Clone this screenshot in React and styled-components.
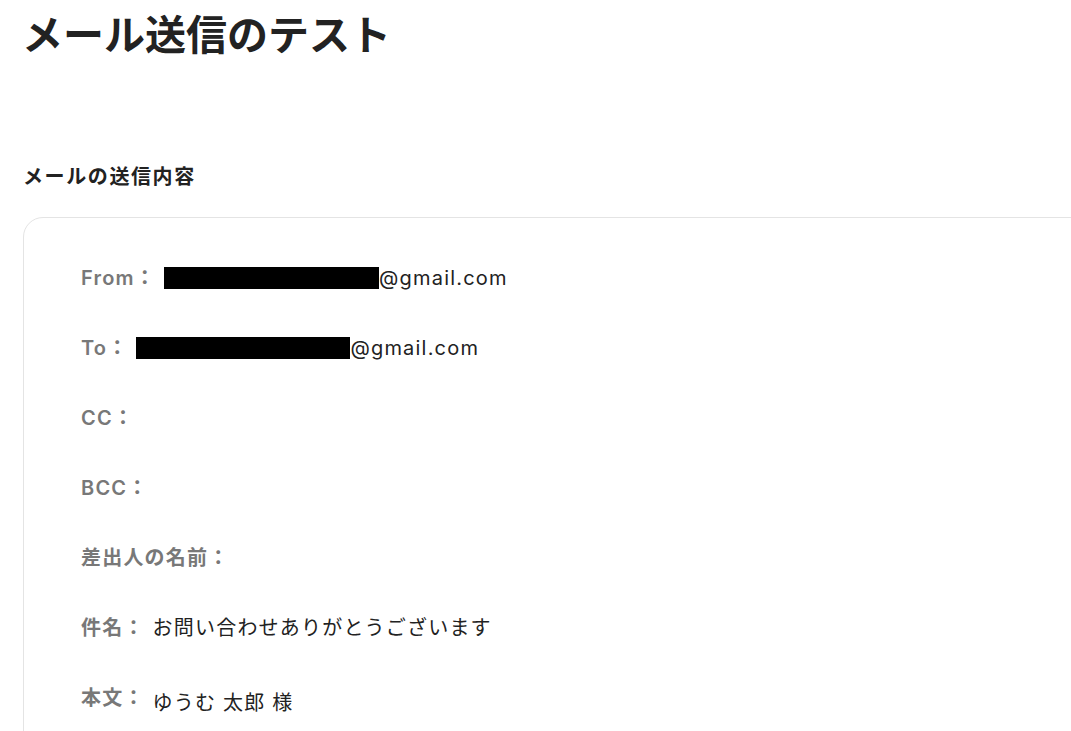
import styled, { createGlobalStyle } from 'styled-components'

const GlobalStyle = createGlobalStyle`
  body {
    margin: 0;
    background: #ffffff;
    font-family: "Inter", "Noto Sans CJK JP", sans-serif;
    color: #222222;
  }
`

const rows = [
  { label: 'From', redactWidth: 215, value: '@gmail.com' },
  { label: 'To', redactWidth: 214, value: '@gmail.com' },
  { label: 'CC' },
  { label: 'BCC' },
  { label: '差出人の名前' },
  { label: '件名', value: 'お問い合わせありがとうございます' },
  { label: '本文', value: 'ゆうむ 太郎 様', low: true },
]

const App = () => {
  return (
    <>
      <GlobalStyle />
      <Page>
        <Title>メール送信のテスト</Title>
        <SubTitle>メールの送信内容</SubTitle>
        <Card>
          {rows.map((row) => (
            <Row key={row.label}>
              <Label>{row.label}：</Label>
              <Value low={row.low}>
                {row.redactWidth && <Redact style={{ width: row.redactWidth }} />}
                {row.value}
              </Value>
            </Row>
          ))}
        </Card>
      </Page>
    </>
  )
}

export default App

const Page = styled.div`
  padding: 0 0 0 22px;
  overflow: hidden;
  height: 731px;
  box-sizing: border-box;
`
const Title = styled.h1`
  margin: 0;
  font-family: "Noto Sans CJK JP", sans-serif;
  font-size: 41px;
  line-height: 64px;
  font-weight: 700;
  color: #222222;
`
const SubTitle = styled.h2`
  margin: 97px 0 0 1px;
  font-family: "Noto Sans CJK JP", sans-serif;
  font-size: 20px;
  line-height: 30px;
  letter-spacing: 0.08em;
  font-weight: 700;
  color: #222222;
`
const Card = styled.div`
  margin: 26px 0 0 1px;
  width: 1200px;
  border: 1px solid #e4e4e4;
  border-radius: 20px;
  padding: 45px 0 0 57px;
  display: flex;
  flex-direction: column;
  gap: 40px;
  box-sizing: border-box;
  min-height: 600px;
`
const Row = styled.div`
  display: flex;
  align-items: flex-start;
  gap: 8px;
  height: 30px;
`
const Label = styled.span`
  font-family: "Inter", "Noto Sans CJK JP", sans-serif;
  font-size: 20px;
  line-height: 30px;
  letter-spacing: 0.06em;
  font-weight: 600;
  color: #787878;
  white-space: nowrap;
`
const Value = styled.span`
  display: flex;
  align-items: center;
  font-family: "Inter", "Noto Sans CJK JP", sans-serif;
  font-size: 20px;
  line-height: 30px;
  letter-spacing: 0.06em;
  color: #222222;
  white-space: nowrap;
  margin-top: ${(p) => (p.low ? '5px' : '0')};
`
const Redact = styled.span`
  display: inline-block;
  height: 22px;
  background: #000000;
`
